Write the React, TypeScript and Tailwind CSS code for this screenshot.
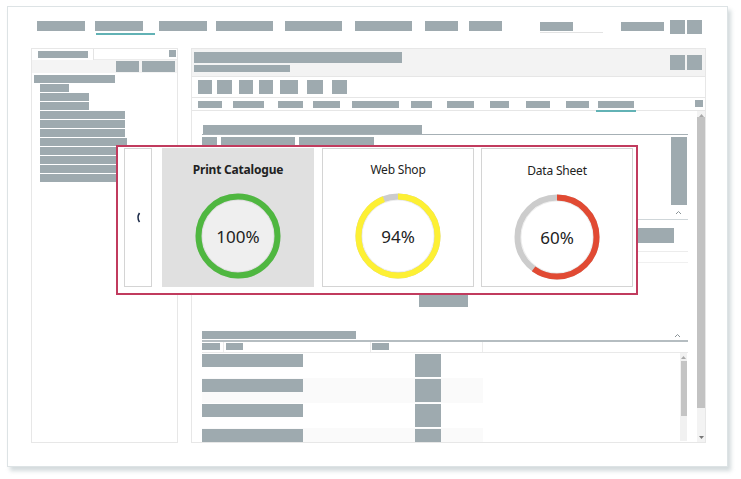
import React from "react";

const G = "bg-[#9eaaaf]";

function Bar({ c }: { c: string }) {
  return <div className={`${G} shrink-0 ${c}`} />;
}

function Caret() {
  return (
    <svg width="7" height="5" viewBox="0 0 7 5" className="shrink-0">
      <polyline points="1,4 3.5,1.5 6,4" fill="none" stroke="#8a9397" strokeWidth="1" />
    </svg>
  );
}

function Donut({ pct, color, fill }: { pct: number; color: string; fill: string }) {
  const r = 39.5;
  const c = 2 * Math.PI * r;
  return (
    <div className="relative w-[86px] h-[86px]">
      <svg width="86" height="86" viewBox="0 0 86 86">
        <circle cx="43" cy="43" r={r} fill={fill} stroke="#cccccc" strokeWidth="6" />
        <circle cx="43" cy="43" r="36" fill="none" stroke="rgba(0,0,0,0.07)" strokeWidth="1" />
        <circle
          cx="43"
          cy="43"
          r={r}
          fill="none"
          stroke={color}
          strokeWidth="6"
          strokeDasharray={`${(c * pct) / 100} ${c}`}
          transform="rotate(-90 43 43)"
        />
      </svg>
      <div className="absolute inset-0 flex items-center justify-center text-[17px] text-[#222] pt-[2px]">
        {pct}%
      </div>
    </div>
  );
}

const tree = [
  "w-[29px]", "w-[49px]", "w-[49px]", "w-[85px]", "w-[85px]", "w-[85px]",
  "w-[87px]", "w-[85px]", "w-[85px]", "w-[85px]", "w-[85px]",
];

const tools = [
  "ml-0 w-[14px]", "ml-[5px] w-[15px]", "ml-[7px] w-[14px]", "ml-[6px] w-[14px]",
  "ml-[7px] w-[18px]", "ml-[9px] w-[16px]", "ml-[9px] w-[15px]",
];

const tabs = [
  "ml-0 w-[24px]", "ml-[11px] w-[31px]", "ml-[14px] w-[25px]", "ml-[10px] w-[27px]",
  "ml-[12px] w-[47px]", "ml-[12px] w-[21px]", "ml-[15px] w-[27px]", "ml-[16px] w-[19px]",
  "ml-[17px] w-[24px]", "ml-[16px] w-[23px]",
];

export default function App() {
  return (
    <div className="w-[741px] h-[479px] bg-white pt-[6px] pl-[7px] relative font-['Noto_Sans',sans-serif] overflow-hidden">
      <div className="w-[721px] h-[461px] bg-white border border-[#dde3e5] shadow-[3px_4px_4px_rgba(160,175,180,0.45)]">
        {/* top nav */}
        <div className="flex items-start h-[15px] mt-[13px] pl-[29px]">
          <Bar c="w-[48px] h-[10px] mt-[1px]" />
          <div className="ml-[10px] w-[60px]">
            <Bar c="w-[48px] h-[10px] mt-[1px]" />
            <div className="mt-[2px] ml-[1px] w-[59px] h-[2px] bg-[#62b2b5]" />
          </div>
          <Bar c="ml-[4px] w-[48px] h-[10px] mt-[1px]" />
          <Bar c="ml-[9px] w-[57px] h-[10px] mt-[1px]" />
          <Bar c="ml-[12px] w-[57px] h-[10px] mt-[1px]" />
          <Bar c="ml-[13px] w-[57px] h-[10px] mt-[1px]" />
          <Bar c="ml-[13px] w-[33px] h-[10px] mt-[1px]" />
          <Bar c="ml-[11px] w-[33px] h-[10px] mt-[1px]" />
          <div className="ml-[38px] w-[63px]">
            <Bar c="w-[33px] h-[9px] mt-[2px]" />
            <div className="mt-px h-px bg-[#e3e3e3]" />
          </div>
          <Bar c="ml-[18px] w-[43px] h-[9px] mt-[2px]" />
          <Bar c="ml-[6px] w-[15px] h-[14px]" />
          <Bar c="ml-[2px] w-[15px] h-[14px]" />
        </div>

        <div className="flex mt-[13px] ml-[23px]">
          {/* left panel */}
          <div className="w-[147px] h-[395px] border border-[#e7e7e7] flex flex-col">
            <div className="flex h-[11px]">
              <div className="w-[62px] border-r border-[#e4e4e4] pl-[6px] pt-[2px]">
                <Bar c="w-[50px] h-[7px]" />
              </div>
              <div className="flex-1 flex justify-end pr-px pt-px border-b border-[#ececec]">
                <Bar c="w-[7px] h-[7px]" />
              </div>
            </div>
            <div className="h-[13px] bg-[#f4f4f4] flex justify-end gap-[3px] pr-[2px] pt-px">
              <Bar c="w-[23px] h-[11px]" />
              <Bar c="w-[33px] h-[11px]" />
            </div>
            <div className="pl-[2px] pt-[2px]">
              <Bar c="w-[81px] h-[8px]" />
              {tree.map((w, i) => (
                <Bar key={i} c={`ml-[6px] mt-px h-[8px] ${w}`} />
              ))}
            </div>
          </div>

          {/* right panel */}
          <div className="ml-[13px] w-[515px] h-[395px] border border-[#e7e7e7] flex flex-col">
            <div className="h-[28px] bg-[#f3f3f3] border-b border-[#e6e6e6] flex justify-between shrink-0">
              <div className="pl-[2px] pt-[3px]">
                <Bar c="w-[208px] h-[11px]" />
                <Bar c="w-[96px] h-[7px] mt-[2px]" />
              </div>
              <div className="flex gap-[2px] pt-[6px] pr-[3px]">
                <Bar c="w-[15px] h-[15px]" />
                <Bar c="w-[15px] h-[15px]" />
              </div>
            </div>
            <div className="h-[21px] border-b border-[#e6e6e6] flex pl-[6px] pt-[3px] shrink-0">
              {tools.map((t, i) => (
                <Bar key={i} c={`h-[14px] ${t}`} />
              ))}
            </div>
            <div className="h-[13px] border-b border-[#e6e6e6] flex items-start pl-[6px] pt-[3px] shrink-0">
              {tabs.map((t, i) => (
                <Bar key={i} c={`h-[7px] ${t}`} />
              ))}
              <div className="ml-[9px] w-[36px]">
                <Bar c="w-[36px] h-[7px]" />
                <div className="mt-[2px] -ml-[2px] w-[40px] h-[2px] bg-[#62b2b5]" />
              </div>
              <Bar c="ml-auto mr-[2px] -mt-px w-[8px] h-[7px]" />
            </div>

            <div className="flex-1 flex min-h-0">
              <div className="flex-1 pl-[10px] overflow-hidden">
                <div className="mt-[14px] w-[486px] border-b border-[#a6b0b5]">
                  <Bar c="w-[219px] h-[9px] ml-px" />
                </div>
                <div className="mt-[2px] w-[486px] border-b border-[#cfd6d9]">
                  <div className="flex items-start">
                    <Bar c="w-[15px] h-[9px]" />
                    <Bar c="ml-[4px] w-[74px] h-[9px]" />
                    <Bar c="ml-[4px] w-[75px] h-[9px]" />
                    <Bar c="ml-auto mr-px w-[16px] h-[68px]" />
                  </div>
                  <div className="h-[14px] flex justify-end items-center pr-[6px]">
                    <Caret />
                  </div>
                </div>
                <Bar c="mt-[8px] ml-[435px] w-[37px] h-[15px]" />
                <div className="mt-[8px] w-[486px] h-px bg-[#ececec]" />
                <div className="mt-[10px] w-[486px] h-px bg-[#f0f0f0]" />
                <Bar c="mt-[32px] ml-[217px] w-[49px] h-[12px]" />
                <div className="mt-[24px] w-[486px] flex items-start border-b-2 border-[#b5bdc1] pb-px">
                  <Bar c="w-[154px] h-[8px]" />
                  <div className="ml-auto mr-[7px] mt-[2px]">
                    <Caret />
                  </div>
                </div>
                <div className="h-[11px] w-[486px] flex border-b border-[#e9e9e9]">
                  <div className="w-[22px] border-r border-[#ececec] pt-px">
                    <Bar c="w-[18px] h-[7px]" />
                  </div>
                  <div className="w-[147px] border-r border-[#ececec] pl-[2px] pt-px">
                    <Bar c="w-[17px] h-[7px]" />
                  </div>
                  <div className="w-[112px] border-r border-[#ececec] pl-[1px] pt-px">
                    <Bar c="w-[17px] h-[7px]" />
                  </div>
                </div>
                <div className="flex h-[88px] w-[486px]">
                  <div className="w-[478px]">
                    {[0, 1, 2, 3].map((i) => (
                      <div
                        key={i}
                        className={`h-[25px] w-[281px] flex items-start ${i % 2 ? "bg-[#fafafa]" : "bg-white"}`}
                      >
                        <Bar c="mt-px w-[101px] h-[13px]" />
                        <Bar c="mt-px ml-[112px] w-[26px] h-[23px]" />
                      </div>
                    ))}
                  </div>
                  <div className="w-[7px] bg-[#f1f1f1] flex flex-col items-center">
                    <svg width="5" height="4" viewBox="0 0 5 4" className="mt-[2px]">
                      <polygon points="0,4 2.5,1 5,4" fill="#a8a8a8" />
                    </svg>
                    <div className="mt-[2px] w-[6px] h-[55px] bg-[#c4c4c4]" />
                  </div>
                </div>
              </div>
              <div className="w-[8px] bg-[#f3f3f3] flex flex-col items-center">
                <svg width="5" height="4" viewBox="0 0 5 4" className="mt-[2px]">
                  <polygon points="0,4 2.5,1 5,4" fill="#a8a8a8" />
                </svg>
                <div className="w-[8px] h-[291px] bg-[#c2c2c2]" />
                <svg width="5" height="4" viewBox="0 0 5 4" className="mt-auto mb-[2px]">
                  <polygon points="0,0 2.5,3 5,0" fill="#777" />
                </svg>
              </div>
            </div>
          </div>
        </div>
      </div>

      {/* highlighted carousel overlay */}
      <div className="absolute left-[116px] top-[145px] w-[522px] h-[150px] border-2 border-[#c13b5e] bg-white flex items-start pl-[6px] pt-px">
        <div className="w-[28px] h-[139px] border border-[#d4d4d4] flex items-center justify-center">
          <svg width="6" height="11" viewBox="0 0 6 11">
            <path d="M4.5 1 Q1.5 5.5 4.5 10" fill="none" stroke="#1b2a48" strokeWidth="1.6" />
          </svg>
        </div>
        <div className="ml-[10px] w-[152px] h-[139px] bg-[#e0e0e0] flex flex-col items-center">
          <div className="mt-[14px] text-[12px] leading-[16px] font-bold text-[#222] tracking-[-0.2px]">Print Catalogue</div>
          <div className="mt-[15px]">
            <Donut pct={100} color="#4fb740" fill="#efefef" />
          </div>
        </div>
        <div className="ml-[8px] w-[152px] h-[139px] border border-[#d4d4d4] bg-white flex flex-col items-center">
          <div className="mt-[13px] text-[12px] leading-[16px] text-[#222] tracking-[-0.2px]">Web Shop</div>
          <div className="mt-[15px]">
            <Donut pct={94} color="#fdf034" fill="#ffffff" />
          </div>
        </div>
        <div className="ml-[7px] w-[152px] h-[139px] border border-[#d4d4d4] bg-white flex flex-col items-center">
          <div className="mt-[14px] text-[12px] leading-[16px] text-[#222] tracking-[-0.2px]">Data Sheet</div>
          <div className="mt-[15px]">
            <Donut pct={60} color="#e14a33" fill="#ffffff" />
          </div>
        </div>
      </div>
    </div>
  );
}
